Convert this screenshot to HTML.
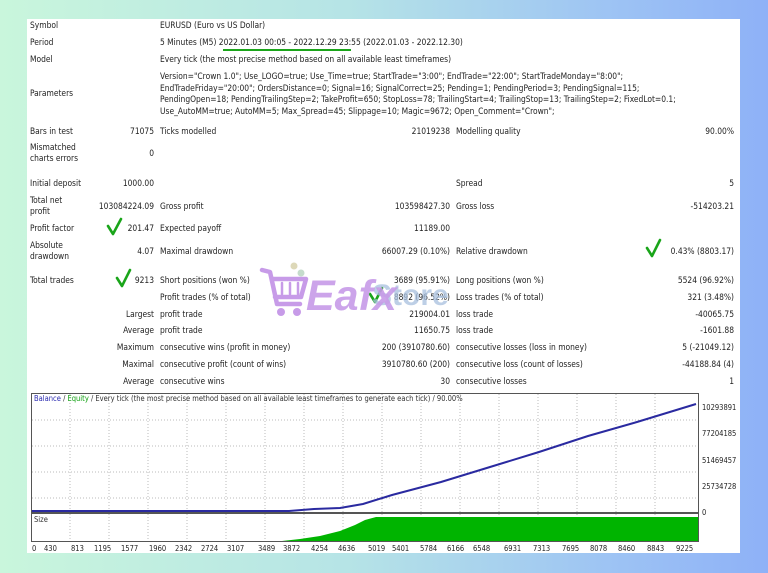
<!DOCTYPE html>
<html><head><meta charset="utf-8"><style>
*{margin:0;padding:0;box-sizing:border-box}
body{width:768px;height:573px;overflow:hidden;background:linear-gradient(90deg,#c9f6dc 0%,#b6e4e6 45%,#9dc3f4 80%,#8eb1f7 100%);font-family:"DejaVu Sans Condensed","Liberation Sans",sans-serif;font-size:8.4px;color:#222;position:relative}
#p{position:absolute;left:27px;top:19px;width:713px;height:534px;background:#fff}
.t{position:absolute;white-space:nowrap;line-height:10px}
.r{text-align:right}
</style></head><body>
<div id="p"></div>
<div class="t" style="left:30px;top:20px">Symbol</div><div class="t" style="left:160px;top:20px">EURUSD (Euro vs US Dollar)</div>
<div class="t" style="left:30px;top:37px">Period</div><div class="t" style="left:160px;top:37px">5 Minutes (M5) 2022.01.03 00:05 - 2022.12.29 23:55 (2022.01.03 - 2022.12.30)</div>
<div style="position:absolute;left:223px;top:49px;width:128px;height:1.5px;background:#1aa51a"></div>
<div class="t" style="left:30px;top:54px">Model</div><div class="t" style="left:160px;top:54px">Every tick (the most precise method based on all available least timeframes)</div>
<div class="t" style="left:30px;top:88px">Parameters</div>
<div class="t" style="left:160px;top:71px;line-height:11.5px">Version="Crown 1.0"; Use_LOGO=true; Use_Time=true; StartTrade="3:00"; EndTrade="22:00"; StartTradeMonday="8:00";<br>EndTradeFriday="20:00"; OrdersDistance=0; Signal=16; SignalCorrect=25; Pending=1; PendingPeriod=3; PendingSignal=115;<br>PendingOpen=18; PendingTrailingStep=2; TakeProfit=650; StopLoss=78; TrailingStart=4; TrailingStop=13; TrailingStep=2; FixedLot=0.1;<br>Use_AutoMM=true; AutoMM=5; Max_Spread=45; Slippage=10; Magic=9672; Open_Comment="Crown";</div>

<div class="t" style="left:30px;top:126px">Bars in test</div><div class="t r" style="right:614px;top:126px">71075</div><div class="t" style="left:160px;top:126px">Ticks modelled</div><div class="t r" style="right:318px;top:126px">21019238</div><div class="t" style="left:456px;top:126px">Modelling quality</div><div class="t r" style="right:34px;top:126px">90.00%</div>
<div class="t" style="left:30px;top:142px;line-height:11px">Mismatched<br>charts errors</div><div class="t r" style="right:614px;top:148px">0</div>
<div class="t" style="left:30px;top:178px">Initial deposit</div><div class="t r" style="right:614px;top:178px">1000.00</div><div class="t" style="left:456px;top:178px">Spread</div><div class="t r" style="right:34px;top:178px">5</div>
<div class="t" style="left:30px;top:195px;line-height:11px">Total net<br>profit</div><div class="t r" style="right:614px;top:201px">103084224.09</div><div class="t" style="left:160px;top:201px">Gross profit</div><div class="t r" style="right:318px;top:201px">103598427.30</div><div class="t" style="left:456px;top:201px">Gross loss</div><div class="t r" style="right:34px;top:201px">-514203.21</div>
<div class="t" style="left:30px;top:223px">Profit factor</div><div class="t r" style="right:614px;top:223px">201.47</div><div class="t" style="left:160px;top:223px">Expected payoff</div><div class="t r" style="right:318px;top:223px">11189.00</div>
<div class="t" style="left:30px;top:240px;line-height:11px">Absolute<br>drawdown</div><div class="t r" style="right:614px;top:246px">4.07</div><div class="t" style="left:160px;top:246px">Maximal drawdown</div><div class="t r" style="right:318px;top:246px">66007.29 (0.10%)</div><div class="t" style="left:456px;top:246px">Relative drawdown</div><div class="t r" style="right:34px;top:246px">0.43% (8803.17)</div>
<div class="t" style="left:30px;top:275px">Total trades</div><div class="t r" style="right:614px;top:275px">9213</div><div class="t" style="left:160px;top:275px">Short positions (won %)</div><div class="t r" style="right:318px;top:275px">3689 (95.91%)</div><div class="t" style="left:456px;top:275px">Long positions (won %)</div><div class="t r" style="right:34px;top:275px">5524 (96.92%)</div>
<div class="t" style="left:160px;top:292px">Profit trades (% of total)</div><div class="t r" style="right:318px;top:292px">8892 (96.52%)</div><div class="t" style="left:456px;top:292px">Loss trades (% of total)</div><div class="t r" style="right:34px;top:292px">321 (3.48%)</div>
<div class="t r" style="right:614px;top:309px">Largest</div><div class="t" style="left:160px;top:309px">profit trade</div><div class="t r" style="right:318px;top:309px">219004.01</div><div class="t" style="left:456px;top:309px">loss trade</div><div class="t r" style="right:34px;top:309px">-40065.75</div>
<div class="t r" style="right:614px;top:325px">Average</div><div class="t" style="left:160px;top:325px">profit trade</div><div class="t r" style="right:318px;top:325px">11650.75</div><div class="t" style="left:456px;top:325px">loss trade</div><div class="t r" style="right:34px;top:325px">-1601.88</div>
<div class="t r" style="right:614px;top:342px">Maximum</div><div class="t" style="left:160px;top:342px">consecutive wins (profit in money)</div><div class="t r" style="right:318px;top:342px">200 (3910780.60)</div><div class="t" style="left:456px;top:342px">consecutive losses (loss in money)</div><div class="t r" style="right:34px;top:342px">5 (-21049.12)</div>
<div class="t r" style="right:614px;top:359px">Maximal</div><div class="t" style="left:160px;top:359px">consecutive profit (count of wins)</div><div class="t r" style="right:318px;top:359px">3910780.60 (200)</div><div class="t" style="left:456px;top:359px">consecutive loss (count of losses)</div><div class="t r" style="right:34px;top:359px">-44188.84 (4)</div>
<div class="t r" style="right:614px;top:376px">Average</div><div class="t" style="left:160px;top:376px">consecutive wins</div><div class="t r" style="right:318px;top:376px">30</div><div class="t" style="left:456px;top:376px">consecutive losses</div><div class="t r" style="right:34px;top:376px">1</div>

<svg style="position:absolute;left:0;top:0" width="768" height="573">
<g fill="none" stroke="#1aa51a" stroke-width="2.6" stroke-linecap="round" stroke-linejoin="round">
<path d="M108 226 L113 234 L121 219"/>
<path d="M117 278 L122 286 L130 270"/>
<path d="M370 294 L375 302 L382 288"/>
<path d="M647 248 L652 256 L660 240"/>
</g>
</svg>

<svg style="position:absolute;left:258px;top:262px" width="220" height="60">
<g fill="none" stroke="#c79be8" stroke-width="4.5" stroke-linecap="round" stroke-linejoin="round">
<path d="M4 8 L12 10 L19 42 L42 42"/><path d="M14 17 L48 17 L43 35 L17 35"/>
<path d="M24 21V32M32 21V32M40 21V32" stroke-width="2.5"/>
</g>
<circle cx="23" cy="50" r="4" fill="#c79be8"/><circle cx="39" cy="50" r="4" fill="#c79be8"/>
<circle cx="36" cy="4" r="3.5" fill="#ddd8b8"/><circle cx="43" cy="11" r="3.5" fill="#c5dccc"/>
<text x="114" y="43" font-family="Liberation Sans" font-weight="bold" font-size="30" fill="#a8c0de" opacity="0.75">Store</text>
<text x="48" y="48" font-family="Liberation Sans" font-style="italic" font-weight="bold" font-size="43" fill="#c79be8" opacity="0.9">Eafx</text>
</svg>

<svg style="position:absolute;left:0;top:0" width="768" height="573">
<rect x="31.5" y="393.5" width="667" height="119" fill="#fff" stroke="#555"/>
<rect x="31.5" y="513.5" width="667" height="28" fill="#fff" stroke="#555"/>
<g stroke="#bbb" stroke-dasharray="1,2">
<path d="M70 394V541M109 394V541M148 394V541M187 394V541M226 394V541M265 394V541M304 394V541M343 394V541M382 394V541M421 394V541M460 394V541M499 394V541M538 394V541M577 394V541M616 394V541M655 394V541"/>
<path d="M32 420H698M32 446H698M32 472H698M32 498H698"/>
</g>
<path d="M282 541 L300 539 L320 536 L340 531 L355 525 L365 520 L376 517 L698 517 L698 541Z" fill="#00b400"/>
<path d="M32 511 L289 511 L314 509 L340 508 L363 504 L392 495 L441 482 L490 467 L539 452 L588 436 L637 422 L696 404" fill="none" stroke="#2a2aa0" stroke-width="2"/>
<text x="34" y="401" font-size="7.5" fill="#333" font-family="DejaVu Sans Condensed,Liberation Sans"><tspan fill="#2a2ab0">Balance</tspan> / <tspan fill="#10a010">Equity</tspan> / Every tick (the most precise method based on all available least timeframes to generate each tick) / 90.00%</text>
<text x="34" y="522" font-size="7.5" fill="#333" font-family="DejaVu Sans Condensed">Size</text>
<g font-size="7.5" fill="#222" font-family="DejaVu Sans Condensed">
<text x="702" y="410">10293891</text><text x="702" y="436">77204185</text><text x="702" y="463">51469457</text><text x="702" y="489">25734728</text><text x="702" y="515">0</text>
<text y="551"><tspan x="32">0</tspan><tspan x="44">430</tspan><tspan x="71">813</tspan><tspan x="94">1195</tspan><tspan x="121">1577</tspan><tspan x="149">1960</tspan><tspan x="175">2342</tspan><tspan x="201">2724</tspan><tspan x="227">3107</tspan><tspan x="258">3489</tspan><tspan x="283">3872</tspan><tspan x="311">4254</tspan><tspan x="338">4636</tspan><tspan x="368">5019</tspan><tspan x="392">5401</tspan><tspan x="420">5784</tspan><tspan x="447">6166</tspan><tspan x="473">6548</tspan><tspan x="504">6931</tspan><tspan x="533">7313</tspan><tspan x="562">7695</tspan><tspan x="590">8078</tspan><tspan x="618">8460</tspan><tspan x="647">8843</tspan><tspan x="676">9225</tspan></text>
</g>
</svg>
</body></html>
